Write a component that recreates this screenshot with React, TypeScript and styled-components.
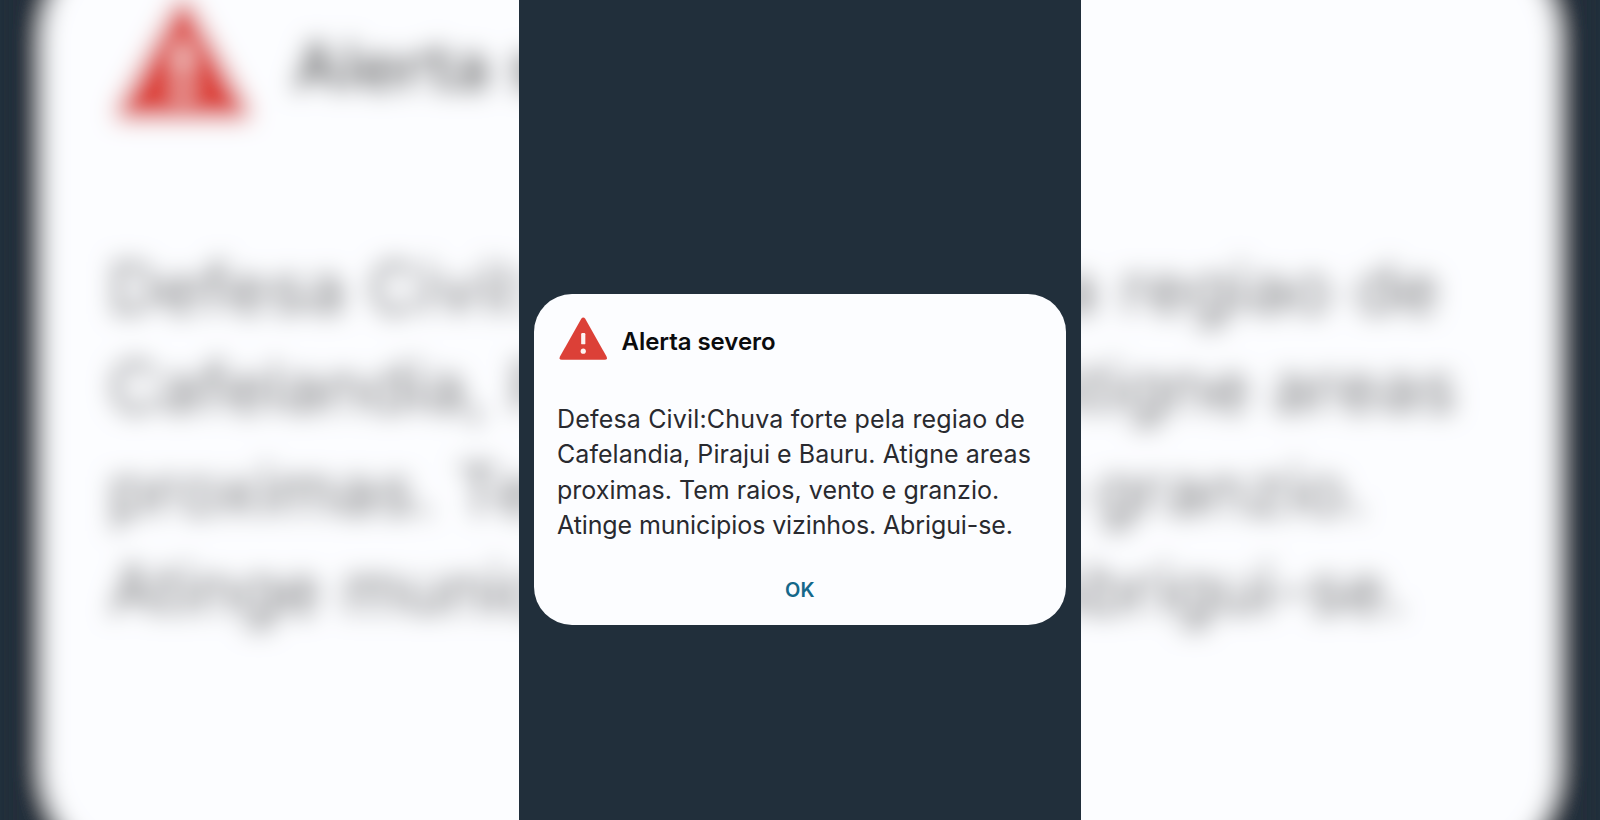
import React from 'react'
import styled, { createGlobalStyle } from 'styled-components'

interface Line {
  text: string
  spacing: number
}

const lines: Line[] = [
  { text: 'Defesa Civil:Chuva forte pela regiao de', spacing: 0.17 },
  { text: 'Cafelandia, Pirajui e Bauru. Atigne areas', spacing: 0.04 },
  { text: 'proximas. Tem raios, vento e granzio.', spacing: 0.02 },
  { text: 'Atinge municipios vizinhos. Abrigui-se.', spacing: -0.11 },
]

function WarningIcon() {
  return (
    <Icon viewBox="0 0 49 44" aria-hidden="true">
      <path
        d="M22.5 1.5Q24.5-.8 26.5 1.5L48 39.8Q49.4 43 46 43H3Q-.4 43 1 39.8Z"
        fill="#dc4037"
      />
      <rect x="22.4" y="16" width="4.2" height="11.4" rx="1.2" fill="#fdf3f2" />
      <circle cx="24.5" cy="34.3" r="2.6" fill="#fdf3f2" />
    </Icon>
  )
}

function AlertScreen() {
  return (
    <Screen>
      <Card>
        <Header>
          <WarningIcon />
          <Title>Alerta severo</Title>
        </Header>
        <Message>
          {lines.map((line) => (
            <MessageLine key={line.text} $spacing={line.spacing}>
              {line.text}
            </MessageLine>
          ))}
        </Message>
        <OkButton>OK</OkButton>
      </Card>
    </Screen>
  )
}

function App() {
  return (
    <>
      <GlobalStyle />
      <FilterDefs aria-hidden="true">
        <filter
          id="soft-blur"
          x="0"
          y="0"
          width="1"
          height="1"
          colorInterpolationFilters="linearRGB"
        >
          <feGaussianBlur stdDeviation="11.5" />
        </filter>
      </FilterDefs>
      <Page>
        <Backdrop aria-hidden="true">
          <Enlarged>
            <AlertScreen />
          </Enlarged>
        </Backdrop>
        <Front>
          <AlertScreen />
        </Front>
      </Page>
    </>
  )
}

const GlobalStyle = createGlobalStyle`
  body {
    margin: 0;
    background: #212f3b;
  }
`

const FilterDefs = styled.svg`
  position: absolute;
  width: 0;
  height: 0;
`

const Page = styled.main`
  position: relative;
  display: flex;
  justify-content: center;
  width: 1600px;
  height: 820px;
  overflow: hidden;
  background: #212f3b;
  font-family: Inter, 'Liberation Sans', sans-serif;
`

// enlarged, out-of-focus copy that fills the sides behind the phone screen
const Backdrop = styled.div`
  position: absolute;
  top: -905px;
  left: 0;
  width: 1600px;
  height: 2334px;
  filter: url(#soft-blur);
`

const Enlarged = styled.div`
  width: 562px;
  transform: scale(2.847);
  transform-origin: 0 0;
`

const Front = styled.div`
  position: relative;
`

const Screen = styled.section`
  box-sizing: border-box;
  width: 562px;
  height: 820px;
  padding: 293.7px 14.5px 0;
  background: #212f3b;
`

const Card = styled.div`
  box-sizing: border-box;
  display: flex;
  flex-direction: column;
  width: 532.5px;
  height: 331px;
  padding: 23.6px 23.5px 0;
  border-radius: 38px;
  background: #fcfdff;
`

const Header = styled.header`
  display: flex;
  align-items: center;
  height: 44px;
  margin-left: 2px;
`

const Icon = styled.svg`
  width: 48.5px;
  height: 44px;
  flex: none;
`

const Title = styled.h1`
  margin: 5px 0 0 14px;
  color: #0b0c0e;
  font-size: 24px;
  font-weight: 600;
  line-height: 30px;
  letter-spacing: -0.05px;
  white-space: nowrap;
`

const Message = styled.p`
  margin: 40.4px 0 0;
  color: #292a2f;
  font-size: 25px;
  line-height: 35.5px;
`

const MessageLine = styled.span<{ $spacing: number }>`
  display: block;
  width: max-content;
  white-space: nowrap;
  letter-spacing: ${(props) => props.$spacing}px;
`

const OkButton = styled.button`
  align-self: center;
  margin: 32.5px 0 0;
  padding: 0;
  border: 0;
  background: none;
  color: #14688a;
  font-family: inherit;
  font-size: 20px;
  font-weight: 600;
  line-height: 28px;
`

export default App
